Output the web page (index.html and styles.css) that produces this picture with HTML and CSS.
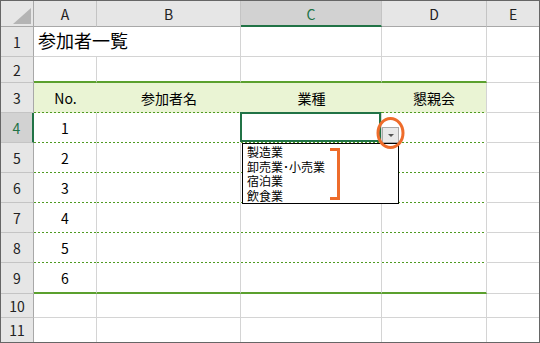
FILE: index.html
```html
<!DOCTYPE html>
<html lang="ja">

<head>
	<meta charset="UTF-8">
	<title>参加者一覧</title>
	<link rel="stylesheet" href="styles.css">
</head>

<body>

	<div class="sheet">
		<!-- 列見出し -->
		<div class="corner"><span class="tri"></span></div>
		<div class="hd">A</div>
		<div class="hd">B</div>
		<div class="hd hd-on">C</div>
		<div class="hd">D</div>
		<div class="hd e">E</div>

		<!-- 1 -->
		<div class="rh">1</div>
		<div class="c title">参加者一覧</div>
		<div class="c"></div>
		<div class="c"></div>
		<div class="c"></div>
		<div class="c e"></div>

		<!-- 2 -->
		<div class="rh">2</div>
		<div class="c top"></div>
		<div class="c top"></div>
		<div class="c top"></div>
		<div class="c top"></div>
		<div class="c e"></div>

		<!-- 3 表の見出し -->
		<div class="rh">3</div>
		<div class="c th dot">No.</div>
		<div class="c th dot">参加者名</div>
		<div class="c th dot">業種</div>
		<div class="c th dot th-last">懇親会</div>
		<div class="c e"></div>

		<!-- 4 -->
		<div class="rh rh-on">4</div>
		<div class="c dot">1</div>
		<div class="c dot"></div>
		<div class="c dot sel">
			<span class="dd-btn"></span>
			<div class="dd-list">
				<div>製造業</div>
				<div>卸売業･小売業</div>
				<div>宿泊業</div>
				<div>飲食業</div>
			</div>
		</div>
		<div class="c dot"></div>
		<div class="c e"></div>

		<!-- 5 -->
		<div class="rh">5</div>
		<div class="c dot">2</div>
		<div class="c dot"></div>
		<div class="c dot"></div>
		<div class="c dot"></div>
		<div class="c e"></div>

		<!-- 6 -->
		<div class="rh">6</div>
		<div class="c dot">3</div>
		<div class="c dot"></div>
		<div class="c dot"></div>
		<div class="c dot"></div>
		<div class="c e"></div>

		<!-- 7 -->
		<div class="rh">7</div>
		<div class="c dot">4</div>
		<div class="c dot"></div>
		<div class="c dot"></div>
		<div class="c dot"></div>
		<div class="c e"></div>

		<!-- 8 -->
		<div class="rh">8</div>
		<div class="c dot">5</div>
		<div class="c dot"></div>
		<div class="c dot"></div>
		<div class="c dot"></div>
		<div class="c e"></div>

		<!-- 9 -->
		<div class="rh">9</div>
		<div class="c end">6</div>
		<div class="c end"></div>
		<div class="c end"></div>
		<div class="c end"></div>
		<div class="c e"></div>

		<!-- 10 -->
		<div class="rh">10</div>
		<div class="c"></div>
		<div class="c"></div>
		<div class="c"></div>
		<div class="c"></div>
		<div class="c e"></div>

		<!-- 11 -->
		<div class="rh last">11</div>
		<div class="c last"></div>
		<div class="c last"></div>
		<div class="c last"></div>
		<div class="c last"></div>
		<div class="c e last"></div>

		<!-- 注目の印 -->
		<svg class="mark" width="540" height="343" viewBox="0 0 540 343">
			<ellipse cx="390.5" cy="133" rx="12.5" ry="14.5" fill="none" stroke="#ee6c2b" stroke-width="3" />
			<polyline points="330,149.5 338.5,149.5 338.5,198.5 330,198.5" fill="none" stroke="#ee6c2b" stroke-width="3" />
		</svg>
	</div>

</body>

</html>
```

FILE: styles.css
```css
* {
	margin: 0;
	padding: 0;
	box-sizing: border-box;
}

body {
	font-family: "Noto Sans CJK JP", "Noto Sans", sans-serif;
	background: #fff;
}

.sheet {
	position: relative;
	width: 540px;
	height: 343px;
	border: 1px solid #666;
	display: grid;
	grid-template-columns: 33px 63px 144px 141px 105px 52px;
	grid-template-rows: 26px 30px 26px 30px 30px 30px 30px 30px 30px 31px 24px 24px;
	font-size: 14px;
	color: #000;
}

/* 見出し */
.corner {
	background: #e6e6e6;
	border-right: 1px solid #a8a8a8;
	border-bottom: 1px solid #a8a8a8;
	display: flex;
	align-items: flex-end;
	justify-content: flex-end;
	padding: 0 2px 2px 0;
}

.tri {
	width: 18px;
	height: 16px;
	background: #b4b4b4;
	clip-path: polygon(100% 0, 100% 100%, 0 100%);
}

.hd,
.rh {
	background: #e6e6e6;
	color: #222;
	display: flex;
	align-items: center;
	justify-content: center;
	line-height: 1;
}

.hd {
	border-right: 1px solid #c4c4c4;
	border-bottom: 1px solid #a8a8a8;
	padding-top: 1px;
}

.hd-on {
	background: #d2d2d2;
	color: #217346;
	border-bottom: 2px solid #217346;
}

.rh {
	border-right: 1px solid #a8a8a8;
	border-bottom: 1px solid #c4c4c4;
}

.rh-on {
	background: #d2d2d2;
	color: #217346;
	border-right: 2px solid #217346;
}

/* セル */
.c {
	border-right: 1px solid #d4d4d4;
	border-bottom: 1px solid #d4d4d4;
	display: flex;
	align-items: center;
	justify-content: center;
	line-height: 1;
	white-space: nowrap;
}

.e {
	border-right: none;
}

.last {
	border-bottom: none;
}

.title {
	justify-content: flex-start;
	padding: 0 0 3px 4px;
	font-size: 18px;
	border-right: none;
}

.top {
	border-bottom: 2px solid #5ba02e;
}

.th {
	background-color: #eaf4d4;
	border-right: none;
}

.th-last {
	border-right: 1px solid #d4d4d4;
}

.dot {
	border-bottom-color: transparent;
	background-image: linear-gradient(90deg, #4f9a22 0, #4f9a22 2px, transparent 2px, transparent 4px);
	background-size: 4px 1px;
	background-repeat: repeat-x;
	background-position: left bottom;
	background-origin: border-box;
}

.end {
	border-bottom: 2px solid #5ba02e;
}

/* 選択セルとリスト */
.sel {
	position: relative;
	z-index: 2;
}

.sel::before {
	content: "";
	position: absolute;
	top: -1px;
	left: -1px;
	right: 0;
	bottom: 0;
	border: 2px solid #217346;
}

.dd-btn {
	position: absolute;
	left: 141px;
	top: 14px;
	width: 17px;
	height: 16px;
	border: 1px solid #a9a9a9;
	background: #e9e9e9;
	display: flex;
	align-items: center;
	justify-content: center;
}

.dd-btn::after {
	content: "";
	border-left: 3px solid transparent;
	border-right: 3px solid transparent;
	border-top: 3px solid #555;
}

.dd-list {
	position: absolute;
	left: 1px;
	top: 30px;
	width: 157px;
	height: 61px;
	border: 1px solid #000;
	background: #fff;
	padding: 1px 4px;
	font-size: 12px;
	line-height: 14.5px;
	text-align: left;
}

.mark {
	position: absolute;
	left: -1px;
	top: -1px;
	z-index: 3;
	pointer-events: none;
}
```
